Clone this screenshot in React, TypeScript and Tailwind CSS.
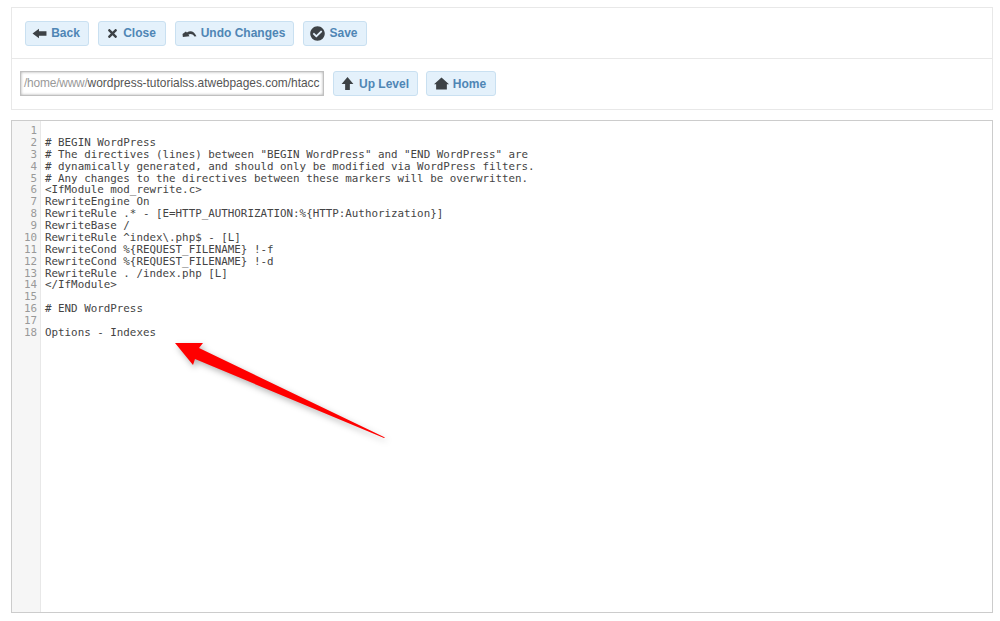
import React from "react";
import { FaTimes, FaCheckCircle } from "react-icons/fa";

const lines = [
  "",
  "# BEGIN WordPress",
  '# The directives (lines) between "BEGIN WordPress" and "END WordPress" are',
  "# dynamically generated, and should only be modified via WordPress filters.",
  "# Any changes to the directives between these markers will be overwritten.",
  "<IfModule mod_rewrite.c>",
  "RewriteEngine On",
  "RewriteRule .* - [E=HTTP_AUTHORIZATION:%{HTTP:Authorization}]",
  "RewriteBase /",
  "RewriteRule ^index\\.php$ - [L]",
  "RewriteCond %{REQUEST_FILENAME} !-f",
  "RewriteCond %{REQUEST_FILENAME} !-d",
  "RewriteRule . /index.php [L]",
  "</IfModule>",
  "",
  "# END WordPress",
  "",
  "Options - Indexes",
];

const iconCls = "w-[15px] h-[15px] shrink-0 text-[#3d4246]";

const BackIcon = () => (
  <svg viewBox="0 0 14 14" className={iconCls} fill="currentColor">
    <path d="M0.5 7 L6.5 2.5 V5 H13.5 V9 H6.5 V11.5 Z" />
  </svg>
);
const CloseIcon = () => <FaTimes className="w-[13px] h-[13px] shrink-0 text-[#3d4246]" />;
const UndoIcon = () => (
  <svg viewBox="0 0 14 14" className={iconCls} fill="currentColor">
    <path d="M0.5 7.5 L3.6 5.2 L4.6 6 C8 3.6 11.5 5 13.5 9.6 L11.6 9.8 C10 7.6 8 7 6 8 L7 9.6 L0.8 10.2 Z" />
  </svg>
);
const SaveIcon = () => <FaCheckCircle className={iconCls} />;
const UpIcon = () => (
  <svg viewBox="0 0 14 14" className={iconCls} fill="currentColor">
    <path d="M7 1 L12.5 7.5 H9.2 V13 H4.8 V7.5 H1.5 Z" />
  </svg>
);
const HomeIcon = () => (
  <svg viewBox="0 0 14 14" className={iconCls} fill="currentColor">
    <path d="M7 1.5 L14 7.8 H12 V12.5 H2 V7.8 H0 Z" />
  </svg>
);

function Btn({ icon, label, w }: { icon: React.ReactNode; label: string; w: string }) {
  return (
    <button
      className={`${w} h-[25px] pr-[2px] flex items-center justify-center gap-[4px] rounded-[3px] border border-[#c9e0f1] bg-[#e4f1fb] text-[12px] font-bold text-[#4f86b5] [font-family:'Liberation_Sans',sans-serif]`}
    >
      {icon}
      <span>{label}</span>
    </button>
  );
}

export default function App() {
  return (
    <div className="w-[1000px] h-[621px] bg-white relative overflow-hidden pt-[7px] pl-[11px] [font-family:'Liberation_Sans',sans-serif]">
      <div className="w-[982px] h-[103px] border border-[#e8e8e8]">
        <div className="h-[51px] border-b border-[#e8e8e8] flex items-center gap-[9px] pl-[13px]">
          <Btn icon={<BackIcon />} label="Back" w="w-[64px]" />
          <Btn icon={<CloseIcon />} label="Close" w="w-[68px]" />
          <Btn icon={<UndoIcon />} label="Undo Changes" w="w-[119px]" />
          <Btn icon={<SaveIcon />} label="Save" w="w-[64px]" />
        </div>
        <div className="h-[50px] flex items-center pl-[8px] pb-[1px]">
          <div className="w-[304px] h-[25px] mr-[9px] border border-[#c0c0c0] shadow-[inset_0_0_3px_#aaa] bg-white flex items-center pl-[3px] overflow-hidden whitespace-nowrap text-[11.93px] text-[#555]">
            <span className="text-[#999] tracking-[-0.2px]">/home/www/</span>
            <span>wordpress-tutorialss.atwebpages.com/htacc</span>
          </div>
          <div className="flex gap-[8px]">
            <Btn icon={<UpIcon />} label="Up Level" w="w-[85px]" />
            <Btn icon={<HomeIcon />} label="Home" w="w-[70px]" />
          </div>
        </div>
      </div>

      <div className="w-[982px] h-[493px] mt-[10px] border border-[#cccccc] flex text-[10.85px] leading-[11.88px] [font-family:'DejaVu_Sans_Mono',monospace]">
        <div className="w-[29px] shrink-0 h-full bg-[#f6f6f6] border-r border-[#e8e8e8] pt-[4px] pr-[3px] text-right text-[#999]">
          {lines.map((_, i) => (
            <div key={i} className="h-[11.88px]">{i + 1}</div>
          ))}
        </div>
        <div className="pt-[4px] pl-[4px] text-[#444] whitespace-pre">
          {lines.map((l, i) => (
            <div key={i} className="h-[11.88px]">{l}</div>
          ))}
        </div>
      </div>

      <svg
        viewBox="0 0 240 120"
        className="absolute left-[149px] top-[330px] w-[240px] h-[120px] [filter:drop-shadow(2px_3px_3px_rgba(0,0,0,0.3))]"
      >
        <path d="M26 13 L54 13 L50 18 L236 107.5 L235 108 L46 29 L44 35 Z" fill="#ff0000" />
      </svg>
    </div>
  );
}
